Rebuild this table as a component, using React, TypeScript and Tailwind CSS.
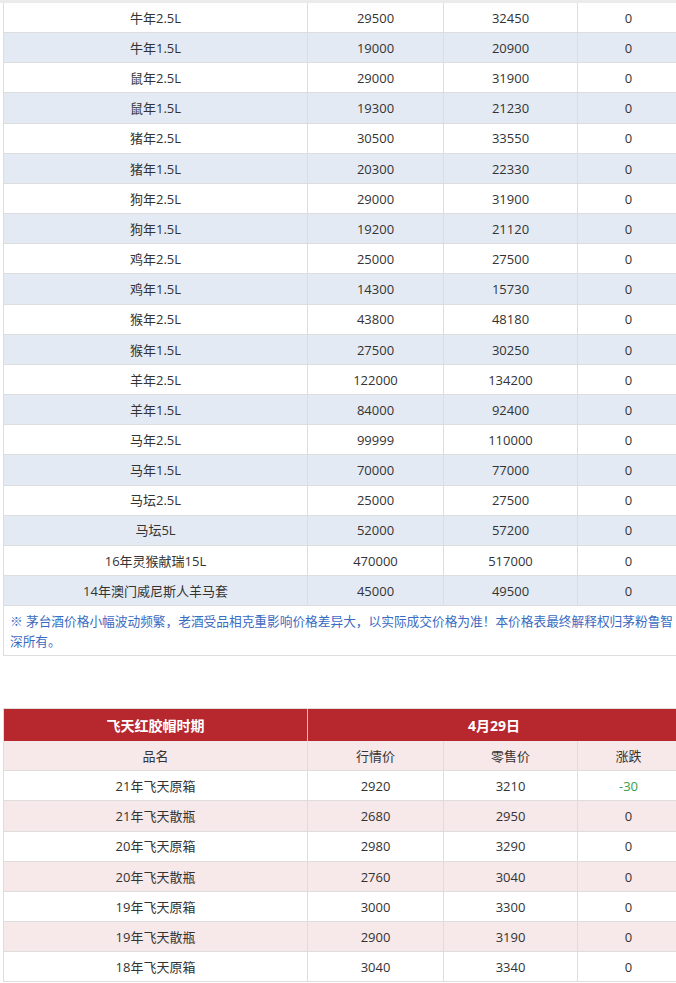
import React from "react";

type Row = [string, string, string, string];

const rowsA: Row[] = [
  ["牛年2.5L", "29500", "32450", "0"],
  ["牛年1.5L", "19000", "20900", "0"],
  ["鼠年2.5L", "29000", "31900", "0"],
  ["鼠年1.5L", "19300", "21230", "0"],
  ["猪年2.5L", "30500", "33550", "0"],
  ["猪年1.5L", "20300", "22330", "0"],
  ["狗年2.5L", "29000", "31900", "0"],
  ["狗年1.5L", "19200", "21120", "0"],
  ["鸡年2.5L", "25000", "27500", "0"],
  ["鸡年1.5L", "14300", "15730", "0"],
  ["猴年2.5L", "43800", "48180", "0"],
  ["猴年1.5L", "27500", "30250", "0"],
  ["羊年2.5L", "122000", "134200", "0"],
  ["羊年1.5L", "84000", "92400", "0"],
  ["马年2.5L", "99999", "110000", "0"],
  ["马年1.5L", "70000", "77000", "0"],
  ["马坛2.5L", "25000", "27500", "0"],
  ["马坛5L", "52000", "57200", "0"],
  ["16年灵猴献瑞15L", "470000", "517000", "0"],
  ["14年澳门威尼斯人羊马套", "45000", "49500", "0"],
];

const rowsB: Row[] = [
  ["21年飞天原箱", "2920", "3210", "-30"],
  ["21年飞天散瓶", "2680", "2950", "0"],
  ["20年飞天原箱", "2980", "3290", "0"],
  ["20年飞天散瓶", "2760", "3040", "0"],
  ["19年飞天原箱", "3000", "3300", "0"],
  ["19年飞天散瓶", "2900", "3190", "0"],
  ["18年飞天原箱", "3040", "3340", "0"],
];

function DataRow({ row, bg }: { row: Row; bg: string }) {
  const down = row[3].startsWith("-");
  return (
    <div className={`flex h-[30.16px] border-l border-b border-[#dddddd] ${bg}`}>
      <div className="w-[304px] shrink-0 flex items-center justify-center pt-[2px] border-r border-[#dddddd]">
        {row[0]}
      </div>
      <div className="w-[136px] shrink-0 flex items-center justify-center pt-[2px] border-r border-[#dddddd]">
        {row[1]}
      </div>
      <div className="w-[134px] shrink-0 flex items-center justify-center pt-[2px] border-r border-[#dddddd]">
        {row[2]}
      </div>
      <div
        className={`w-[102px] shrink-0 flex items-center justify-center pt-[2px] border-r border-[#dddddd] ${
          down ? "text-[#3a9e46]" : ""
        }`}
      >
        {row[3]}
      </div>
    </div>
  );
}

export default function App() {
  return (
    <div className="w-[676px] h-[983px] overflow-hidden bg-white text-[#333333] text-[13px] font-[family-name:'Open_Sans','Noto_Sans_CJK_SC',sans-serif]">
      <div className="h-[3px] bg-[#ebebeb]" />
      <div className="pl-[3px] w-[683px]">
        {rowsA.map((r, i) => (
          <DataRow key={i} row={r} bg={i % 2 === 1 ? "bg-[#e4eaf4]" : "bg-white"} />
        ))}
        <div className="h-[50px] border-l border-b border-r border-[#dddddd] px-[6px] pt-[5px] pb-[3px] text-[12.7px] leading-[20px] text-[#3a6bc2]">
          ※ 茅台酒价格小幅波动频繁，老酒受品相克重影响价格差异大，以实际成交价格为准！本价格表最终解释权归茅粉鲁智深所有。
        </div>

        <div className="mt-[52px] border-t border-[#dddddd]">
          <div className="flex h-[32px] border-l border-[#dddddd] bg-[#b7282e] text-white font-bold text-[14px]">
            <div className="w-[304px] shrink-0 flex items-center justify-center border-r border-[#e6b9bb]">
              飞天红胶帽时期
            </div>
            <div className="w-[372px] shrink-0 flex items-center justify-center">4月29日</div>
          </div>
          <DataRow row={["品名", "行情价", "零售价", "涨跌"]} bg="bg-[#f7e8e9]" />
          {rowsB.map((r, i) => (
            <DataRow key={i} row={r} bg={i % 2 === 1 ? "bg-[#f7e8e9]" : "bg-white"} />
          ))}
        </div>
      </div>
    </div>
  );
}
